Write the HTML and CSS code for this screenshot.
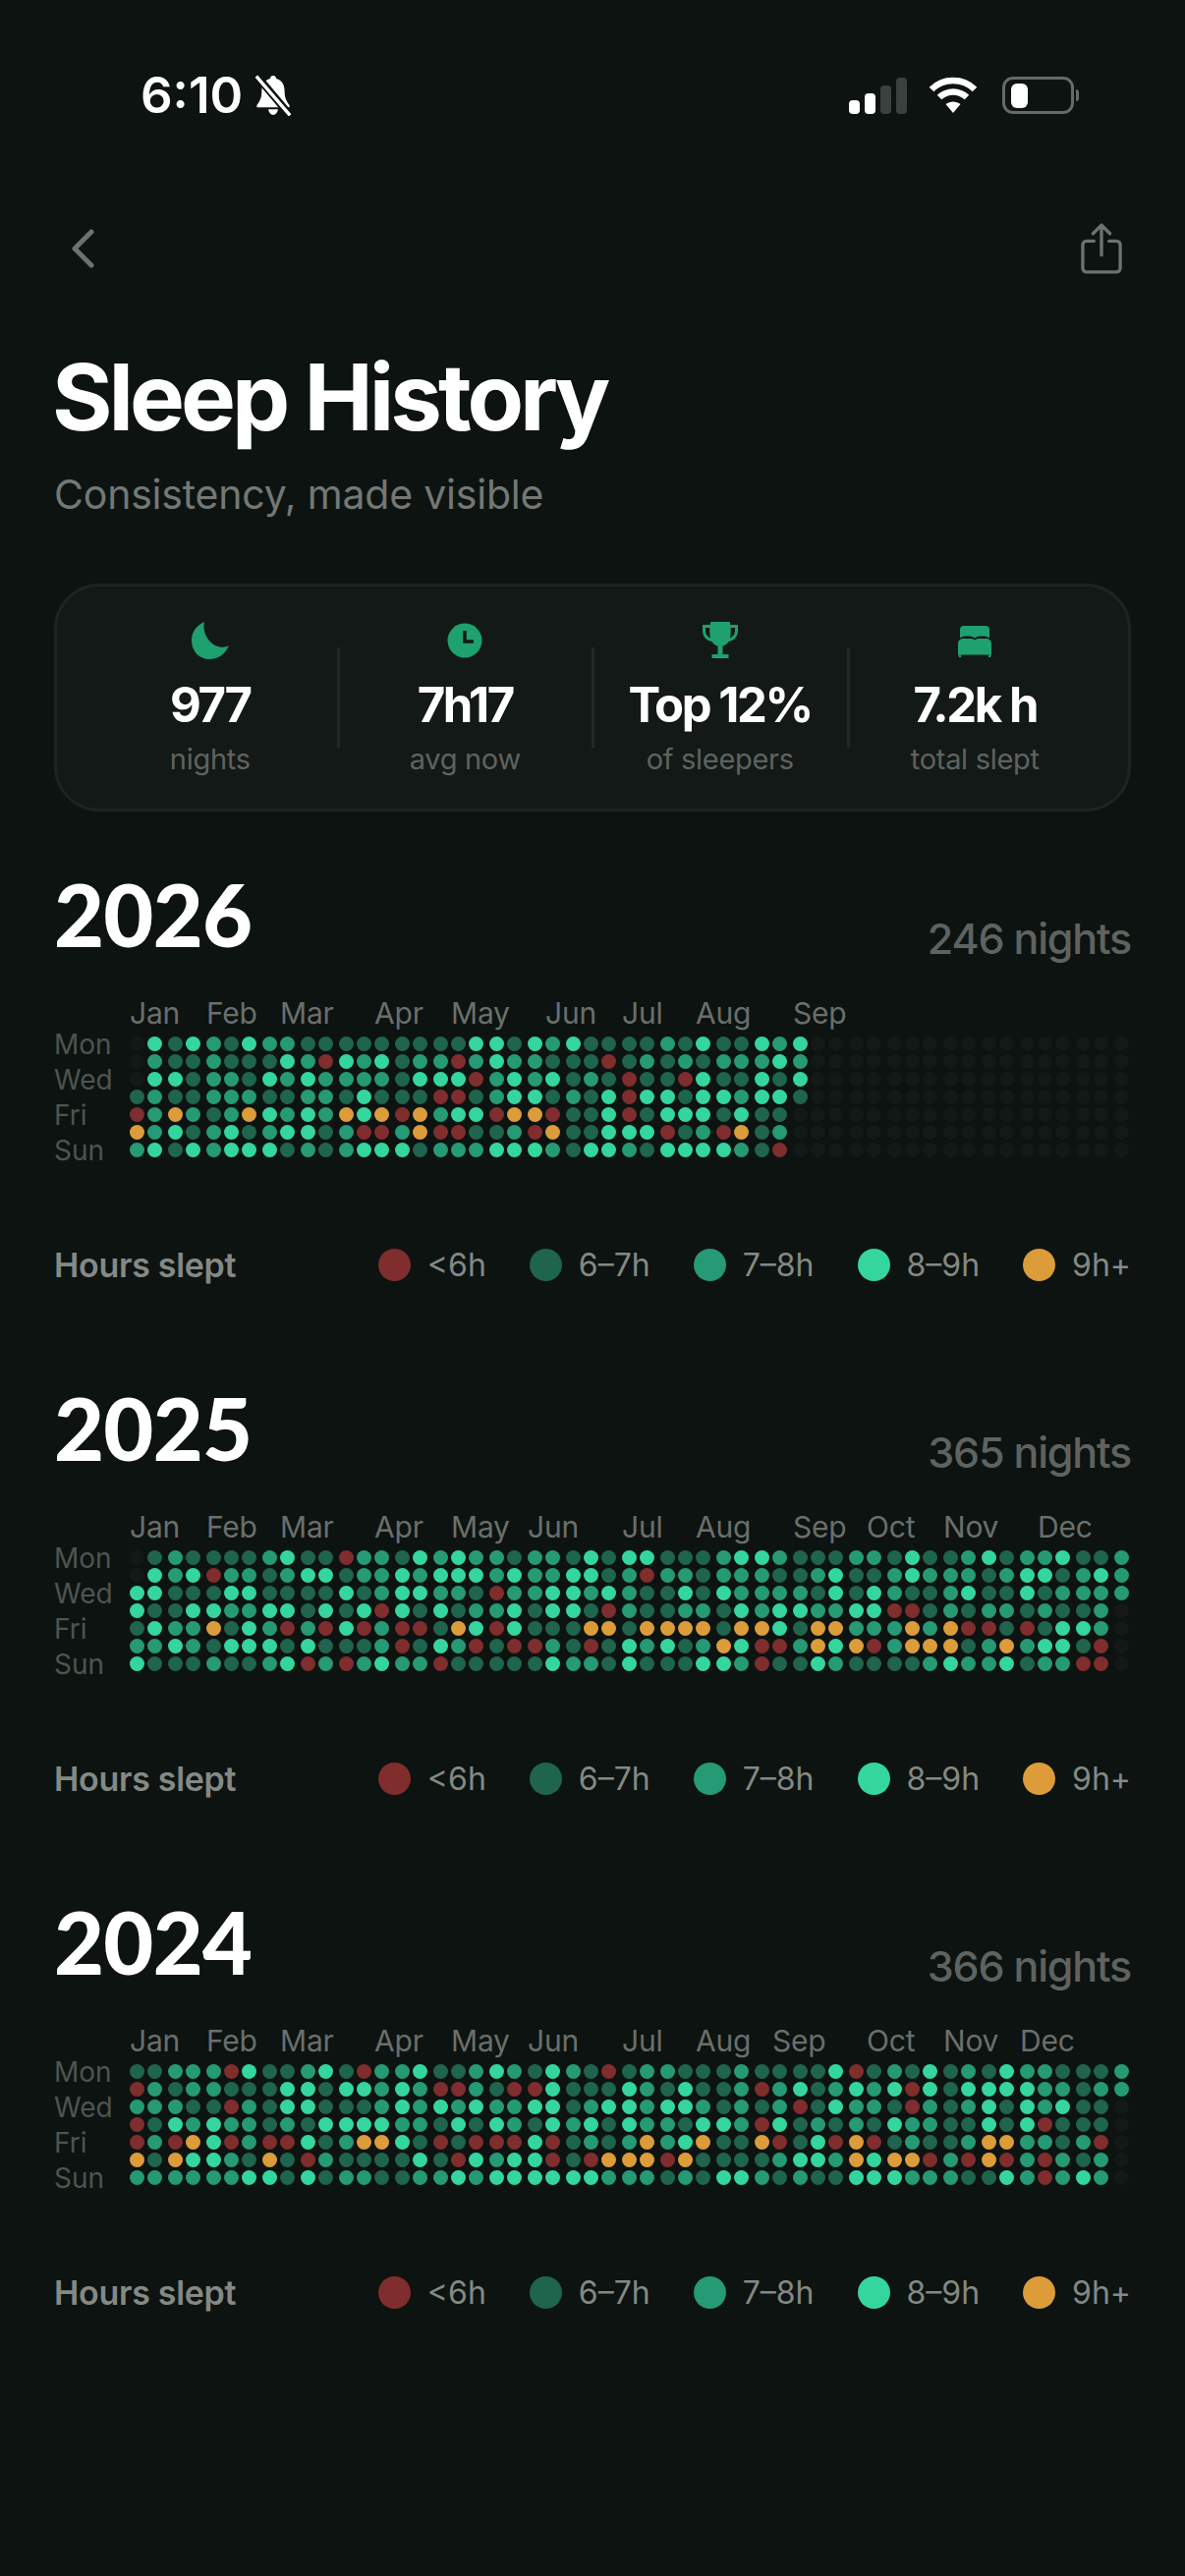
FILE: index.html
```html
<!DOCTYPE html>
<html lang="en">
<head>
    <meta charset="UTF-8">
    <meta name="viewport" content="width=device-width, initial-scale=1.0">
    <title>Sleep History</title>
    <link rel="stylesheet" href="styles.css">
</head>
<body>
    <div class="status-bar">
        <div class="status-left">
            <span class="clock">6:10</span>
            <svg class="bell" viewBox="3 0 32 38">
                <path d="M19 1c1.600 0 2.600 1 2.800 2.600C27 5 29.500 9.500 29.500 15c0 6 1.600 9.500 4.500 13v2H4v-2c2.900-3.500 4.500-7 4.500-13C8.500 9.500 11 5 16.200 3.600 16.400 2 17.400 1 19 1z" fill="#fff"/>
                <path d="M14.500 32h9c-.5 3-2.200 5-4.500 5s-4-2-4.500-5z" fill="#fff"/>
                <path d="M3 0l32 38" stroke="#0d1310" stroke-width="7"/>
                <path d="M3.500 1.500l31 36" stroke="#fff" stroke-width="3"/>
            </svg>
        </div>
        <div class="status-right">
            <div class="signal">
                <span class="bar bar-1"></span>
                <span class="bar bar-2"></span>
                <span class="bar bar-3"></span>
                <span class="bar bar-4"></span>
            </div>
            <svg class="wifi" viewBox="0 0 50 38" fill="none" stroke="#fff" stroke-width="6.500">
                <path d="M3 13C15 1 35 1 47 13"/>
                <path d="M11 21c8-7.500 20-7.500 28 0"/>
                <path d="M25 37l-7.500-9c4.500-3.500 10.500-3.500 15 0z" fill="#fff" stroke="none"/>
            </svg>
            <div class="battery">
                <div class="battery-body"><span class="battery-level"></span></div>
                <span class="battery-nub"></span>
            </div>
        </div>
    </div>

    <div class="nav">
        <svg class="back" viewBox="0 0 24 40" fill="none" stroke="#6d726f" stroke-width="5" stroke-linecap="round" stroke-linejoin="round">
            <path d="M21 3L4 20l17 17"/>
        </svg>
        <svg class="share" viewBox="0 0 44 54" fill="none" stroke="#6d726f" stroke-width="3.500" stroke-linecap="round" stroke-linejoin="round">
            <path d="M22 34V3M13 11l9-9 9 9"/>
            <path d="M14 19H6a4 4 0 0 0-4 4v25a4 4 0 0 0 4 4h32a4 4 0 0 0 4-4V23a4 4 0 0 0-4-4h-8"/>
        </svg>
    </div>

    <h1 class="title">Sleep History</h1>
    <p class="subtitle">Consistency, made visible</p>

    <div class="stats">
        <div class="stat">
            <svg class="stat-icon" viewBox="0 0 38 38">
                <path d="M13 0C4 4 0 11 0 19c0 11 8 19 18 19 9 0 16-5 20-14-3 2-11 3-17-2C15 17 11 9 13 0z" fill="#1fa06f"/>
            </svg>
            <div class="stat-value">977</div>
            <div class="stat-label">nights</div>
        </div>
        <div class="stat">
            <svg class="stat-icon" viewBox="0 0 38 38">
                <circle cx="19" cy="19" r="17.500" fill="#1fa06f"/>
                <path d="M19 9v11h9" fill="none" stroke="#131916" stroke-width="3.500"/>
            </svg>
            <div class="stat-value">7h17</div>
            <div class="stat-label">avg now</div>
        </div>
        <div class="stat">
            <svg class="stat-icon" viewBox="0 0 38 38">
                <path d="M9 0h20v3h8v6c0 6-4 10-9.500 11-1.500 2.500-3.500 4-6 4.600V33h6v4H10.500v-4h6v-8.400c-2.500-.6-4.500-2.100-6-4.600C5 19 1 15 1 9V3h8V0zM4 6v3c0 3.500 2 6 5 7.400-.6-2.600-.8-6-.8-10.400H4zm30 0h-4.200c0 4.400-.2 7.800-.8 10.400 3-1.400 5-3.900 5-7.400V6z" fill="#1fa06f" fill-rule="evenodd"/>
            </svg>
            <div class="stat-value">Top 12%</div>
            <div class="stat-label">of sleepers</div>
        </div>
        <div class="stat">
            <svg class="stat-icon" viewBox="0 0 38 38">
                <path d="M8 4h22a4 4 0 0 1 4 4v8.500c-2-1.500-4-2-6.500-2h-3c-2 0-4 .7-5.500 2-1.500-1.300-3.500-2-5.500-2h-3c-2.500 0-4.500.5-6.500 2V8a4 4 0 0 1 4-4z" fill="#1fa06f"/>
                <path d="M2 22c0-3 2.500-5 5.500-5H15c1.600 0 3 .6 4 1.600 1-1 2.400-1.600 4-1.600h7.500c3 0 5.500 2 5.500 5v11.500H2z" fill="#1fa06f"/>
                <path d="M2 33.500h3V36H3zM33 33.500h3L35 36h-2z" fill="#1fa06f"/>
            </svg>
            <div class="stat-value">7.2k h</div>
            <div class="stat-label">total slept</div>
        </div>
    </div>

    <div id="years"></div>

    <script src="script.js"></script>
</body>
</html>
```

FILE: styles.css
```css
* {
    margin: 0;
    padding: 0;
    box-sizing: border-box;
}

body {
    font-family: Inter, "Liberation Sans", sans-serif;
    background-color: #0d1310;
    width: 1206px;
    min-height: 2622px;
    padding: 0 55px;
    overflow-x: hidden;
}

/* status bar */
.status-bar {
    display: flex;
    justify-content: space-between;
    align-items: center;
    height: 38px;
    margin-top: 78px;
    padding: 0 53px 0 88px;
}

.status-left {
    display: flex;
    align-items: center;
    gap: 12px;
}

.clock {
    color: #fff;
    font-size: 51px;
    font-weight: 600;
    line-height: 38px;
    letter-spacing: 0;
}

.bell {
    width: 38px;
    height: 42px;
}

.status-right {
    display: flex;
    align-items: center;
}

.signal {
    display: flex;
    align-items: flex-end;
    gap: 5px;
    height: 37px;
    margin-right: 22px;
}

.bar {
    display: block;
    width: 11px;
    border-radius: 4px;
    background-color: #fff;
}

.bar-1 { height: 14px; }
.bar-2 { height: 21px; }
.bar-3 { height: 29px; background-color: #3c413f; }
.bar-4 { height: 37px; background-color: #3c413f; }

.wifi {
    width: 50px;
    height: 38px;
    margin-right: 25px;
}

.battery {
    display: flex;
    align-items: center;
    gap: 2px;
}

.battery-body {
    display: flex;
    align-items: center;
    width: 73px;
    height: 38px;
    padding: 0 6px;
    border: 3px solid #666b68;
    border-radius: 11px;
}

.battery-level {
    display: block;
    width: 17px;
    height: 25px;
    border-radius: 6px;
    background-color: #fff;
}

.battery-nub {
    display: block;
    width: 3px;
    height: 12px;
    border-radius: 0 3px 3px 0;
    background-color: #666b68;
}

/* nav */
.nav {
    display: flex;
    justify-content: space-between;
    align-items: center;
    height: 54px;
    margin-top: 110px;
    padding: 0 9px 0 17px;
}

.back {
    width: 24px;
    height: 40px;
}

.share {
    width: 42px;
    height: 54px;
}

/* heading */
.title {
    margin-top: 67px;
    margin-left: -2px;
    color: #fff;
    font-size: 94px;
    font-weight: 700;
    line-height: 114px;
    letter-spacing: -4px;
}

.subtitle {
    margin-top: 17px;
    color: #737874;
    font-size: 41px;
    font-weight: 400;
    line-height: 50px;
    letter-spacing: -.2px;
}

/* stats card */
.stats {
    display: flex;
    margin-top: 66px;
    height: 232px;
    padding: 0 26px;
    border: 3px solid #1e2421;
    border-radius: 46px;
    background-color: #131916;
}

.stat {
    flex: 1;
    display: flex;
    flex-direction: column;
    align-items: center;
    padding-top: 36px;
    position: relative;
}

/* divider between the stats */
.stat + .stat::before {
    content: "";
    position: absolute;
    left: -1px;
    top: 62px;
    width: 3px;
    height: 102px;
    background-color: #232825;
}

.stat-icon {
    display: block;
    width: 38px;
    height: 38px;
}

.stat-value {
    margin-top: 17px;
    color: #fff;
    font-size: 49px;
    font-weight: 700;
    line-height: 60px;
    letter-spacing: -2.400px;
}

.stat-label {
    margin-top: 7px;
    color: #5e6360;
    font-size: 29px;
    line-height: 36px;
    letter-spacing: -.3px;
}

/* year blocks */
.year {
    margin-top: 56px;
}

.year + .year {
    margin-top: 98px;
}

.year-head {
    display: flex;
    justify-content: space-between;
    align-items: flex-end;
    height: 96px;
}

.year-title {
    color: #fff;
    font-family: Lato, Inter, sans-serif;
    font-size: 88px;
    font-weight: 900;
    line-height: 96px;
    letter-spacing: -.7px;
}

.year-count {
    color: #5e6360;
    font-size: 43px;
    font-weight: 500;
    line-height: 46px;
    letter-spacing: -1.200px;
}

.chart {
    display: flex;
    margin-top: 29px;
}

.days {
    width: 77px;
    padding-top: 38px;
}

.day {
    height: 36px;
    color: #4f5451;
    font-size: 28px;
    line-height: 36px;
}

.weeks {
    display: flex;
    gap: 6px;
}

.run {
    display: flex;
    gap: 3px;
}

.week {
    display: flex;
    flex-direction: column;
    gap: 3px;
    width: 15px;
}

.month {
    height: 45px;
    color: #6a6f6c;
    font-size: 30px;
    line-height: 48px;
    letter-spacing: -.2px;
    white-space: nowrap;
}

.dot {
    display: block;
    width: 15px;
    height: 15px;
    border-radius: 50%;
}

.lvl-e { background-color: #131916; }
.lvl-r { background-color: #7f2d2d; }
.lvl-d { background-color: #1f644c; }
.lvl-m { background-color: #259a74; }
.lvl-b { background-color: #34d69e; }
.lvl-o { background-color: #dc9c3a; }

/* legend */
.legend {
    display: flex;
    justify-content: space-between;
    align-items: center;
    height: 40px;
    margin-top: 78px;
}

.legend-title {
    color: #848985;
    font-size: 34px;
    font-weight: 600;
    letter-spacing: -.3px;
}

.legend-items {
    display: flex;
    gap: 44px;
}

.legend-item {
    display: flex;
    align-items: center;
    gap: 17px;
    color: #848985;
    font-size: 32px;
}

.legend-dot {
    display: block;
    width: 33px;
    height: 33px;
    border-radius: 50%;
}
```

FILE: script.js
```js
// weeks are drawn in runs, a slightly wider gap sits between runs
const runs = [2, 2, 3, 2, 2, 3, 2, 3, 2, 2, 3, 2, 3, 2, 2, 3, 2, 3, 2, 2, 3, 2, 1];
const dayNames = ['Mon', 'Wed', 'Fri', 'Sun'];
const legend = [['r', '<6h'], ['d', '6–7h'], ['m', '7–8h'], ['b', '8–9h'], ['o', '9h+']];

// r <6h, d 6-7h, m 7-8h, b 8-9h, o 9h+, . no entry
const years = [
    {
        year: 2026,
        nights: 246,
        months: { 1: 'Jan', 5: 'Feb', 9: 'Mar', 14: 'Apr', 18: 'May', 23: 'Jun', 27: 'Jul', 31: 'Aug', 36: 'Sep' },
        rows: [
            '.bdbmdbmmdddddddddbbdbmbdd' + 'ddmdbddbmb',
            '.mddmdddbmrbmbdmmrmbmmdddr' + 'dmdmdmmmbm',
            '.bbdmmdbmbmmmmdbbbrmbmbdmd' + 'rddrbddbdb',
            'dmddmmmddmmdbdddrrdmbbdmdb' + 'rbbdbbmbbd',
            'rmomdmobmbmoboro' + 'mbbroorddb' + 'rdbbbdbdd.',
            'ombdmbdmbbdmrrmorrddmroddb' + 'bbrdmrodm.',
            'mbdbmbbbdmdmbbbdmmmbbbmdbb' + 'mdbbbbmdr.'
        ]
    },
    {
        year: 2025,
        nights: 365,
        months: { 1: 'Jan', 5: 'Feb', 9: 'Mar', 14: 'Apr', 18: 'May', 22: 'Jun', 27: 'Jul', 31: 'Aug', 36: 'Sep', 40: 'Oct', 44: 'Nov', 49: 'Dec' },
        rows: [
            '.dmddddmbddrmmdbmbmmdmmdbd' + 'bbdddmbbmdddmmdbddmbdmmbddm',
            '.bmbrmmdmbbdmmbmbbbmbmmbbd' + 'mrmmdmmmddmbddmbmmmdmbbdmbm',
            'bbdddbbddddbdmbbmmdrmmbbmb' + 'mddbdbmmmmdbdbmddmbddbdmmmm',
            'bddbbmmbbdbdbrbdbdmmbdbbdr' + 'mddmmdbmbbmmbbrrdmdmmdmddm.',
            'dbmmodbmrmrbrmrrdobrbdddoo' + 'doooodoobdoommmomorrdrdbbm.',
            'mmbmdbbbdbdddmrdbmrdrrmdrd' + 'bmbdmobrrmobormooodmombbdr.',
            'bdddmddmbrmrmbmmrdddddbmmd' + 'bdddbbmrddbmddddmbmmbdmmrr.'
        ]
    },
    {
        year: 2024,
        nights: 366,
        months: { 1: 'Jan', 5: 'Feb', 9: 'Mar', 14: 'Apr', 18: 'May', 22: 'Jun', 27: 'Jul', 31: 'Aug', 35: 'Sep', 40: 'Oct', 44: 'Nov', 48: 'Dec' },
        rows: [
            'ddmmmrbddmbdrmmbddmbmdbmdr' + 'dmmdddmddddbrdmdbdmdbmmdddm',
            'rmdmmdddbbdbbmbmrrmdrrbddd' + 'bmdbddmrmbdmbmbrbdbbbbmmdmm',
            'mmmddrmdbbdddmbmbmbmmbbdmb' + 'bmbbmdmdmrdbmmdrmdmbdbmbdd.',
            'rdbmbmmdmdbbbbmmdbdbmdbmbd' + 'bmmdbbmrbdmdmdbmmddbdbrddd.',
            'rmrobrmrrbdmoobdrdrrrbrdmd' + 'momboddordbrordmddmoommdmr.',
            'odobbmdodrmddddbdrbmbbrdro' + 'oorodddd' + 'mbbmoboormrormrmdm.',
            'mmmmmmbbdbdmmddmmbmbbbbbbm' + 'mmdmdbbmdmddbbbmmmddbmrmbm.'
        ]
    }
];

function el(tag, className, text) {
    const node = document.createElement(tag);
    node.className = className;
    if (text) node.textContent = text;
    return node;
}

function buildWeek(data, col) {
    const week = el('div', 'week');
    week.appendChild(el('div', 'month', data.months[col + 1]));
    data.rows.forEach(row => {
        const level = row[col] || '.';
        week.appendChild(el('span', 'dot lvl-' + (level === '.' ? 'e' : level)));
    });
    return week;
}

function buildYear(data) {
    const block = el('section', 'year');

    const head = el('div', 'year-head');
    head.appendChild(el('div', 'year-title', String(data.year)));
    head.appendChild(el('div', 'year-count', data.nights + ' nights'));
    block.appendChild(head);

    const chart = el('div', 'chart');
    const days = el('div', 'days');
    dayNames.forEach(name => days.appendChild(el('div', 'day', name)));
    chart.appendChild(days);

    const weeks = el('div', 'weeks');
    let col = 0;
    runs.forEach(size => {
        const run = el('div', 'run');
        for (let i = 0; i < size; i++) {
            run.appendChild(buildWeek(data, col));
            col++;
        }
        weeks.appendChild(run);
    });
    chart.appendChild(weeks);
    block.appendChild(chart);

    const foot = el('div', 'legend');
    foot.appendChild(el('div', 'legend-title', 'Hours slept'));
    const items = el('div', 'legend-items');
    legend.forEach(([level, label]) => {
        const item = el('div', 'legend-item');
        item.appendChild(el('span', 'legend-dot lvl-' + level));
        item.appendChild(el('span', 'legend-label', label));
        items.appendChild(item);
    });
    foot.appendChild(items);
    block.appendChild(foot);

    return block;
}

const container = document.getElementById('years');
years.forEach(data => container.appendChild(buildYear(data)));
```
